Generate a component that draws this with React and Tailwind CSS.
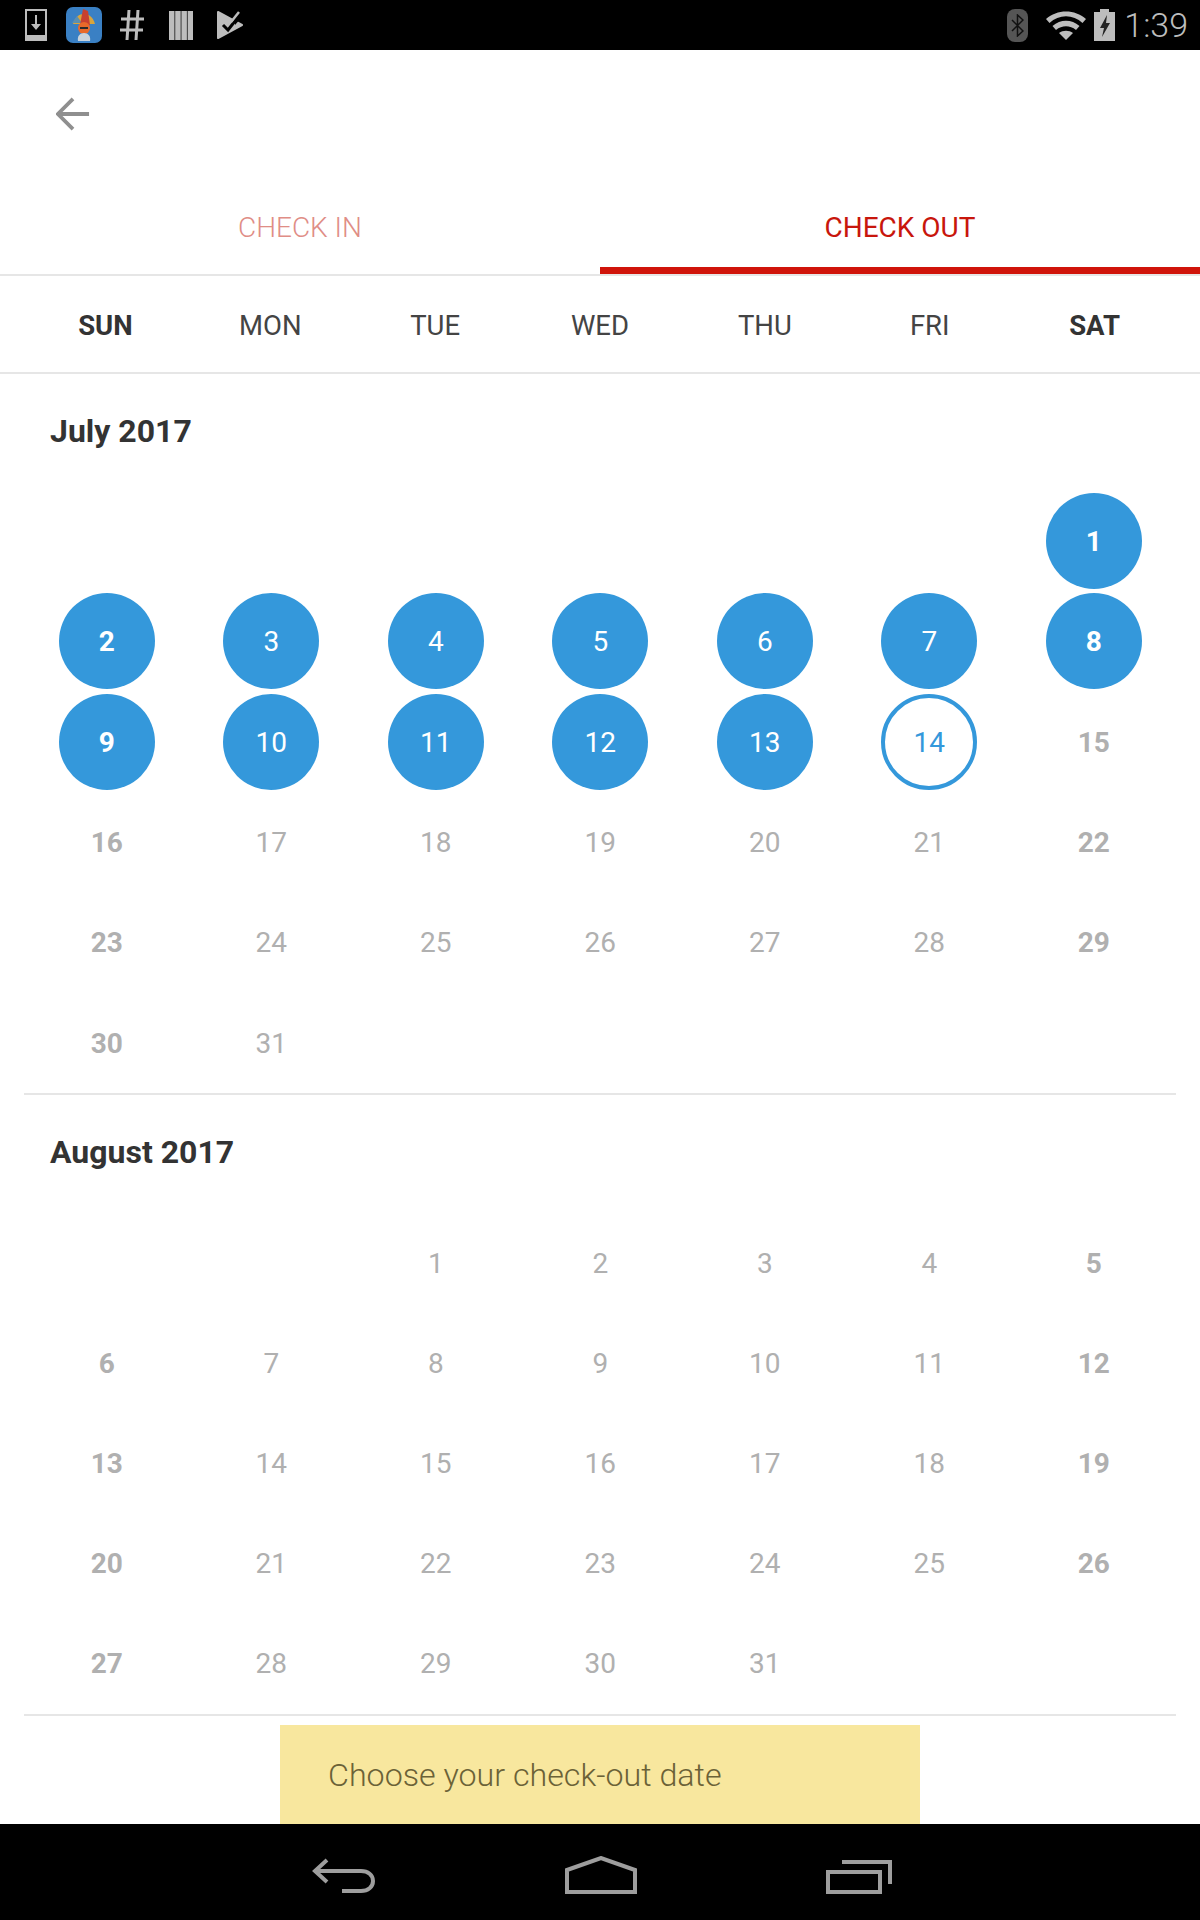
const weekdays = ['SUN', 'MON', 'TUE', 'WED', 'THU', 'FRI', 'SAT'];

const july = [null, null, null, null, null, null, 1, ...Array.from({ length: 30 }, (_, i) => i + 2)];
const august = [null, null, 1, ...Array.from({ length: 30 }, (_, i) => i + 2)];

const StatusIcons = () => (
  <div className="flex items-center pl-[25px]">
    <svg width="22" height="32" viewBox="0 0 22 32" className="text-[#bdbdbd]">
      <path d="M1 1h20v30H1z" fill="none" stroke="currentColor" strokeWidth="2" />
      <path d="M0 26h22v6H0z" fill="currentColor" />
      <path d="M10 6h2v9h4l-5 6-5-6h4z" fill="currentColor" />
    </svg>
    <div className="ml-[19px] w-[36px] h-[36px] rounded-[7px] bg-[#3a80c4] overflow-hidden">
      <svg width="36" height="36" viewBox="0 0 36 36">
        <path d="M7 17C9 10 13 7 18 7s9 3 11 10z" fill="#d9a53c" />
        <path d="M6 16l5-7 5 7z" fill="#5c8fb0" />
        <path d="M14 18l3-16 5 2 2 14z" fill="#c8402f" />
        <circle cx="18" cy="21" r="6" fill="#e8692a" />
        <path d="M14 20h8v2h-8z" fill="#2b2b2b" />
        <path d="M12 34c-1-5 2-8 6-8s7 3 6 8z" fill="#c9d3dc" />
      </svg>
    </div>
    <svg width="24" height="30" viewBox="0 0 24 30" className="ml-[18px] text-[#bdbdbd]">
      <path d="M9 0L7 30M18 0l-2 30M1 9h23M0 20h23" stroke="currentColor" strokeWidth="3" fill="none" />
    </svg>
    <svg width="24" height="30" viewBox="0 0 24 30" className="ml-[25px] text-[#bdbdbd]">
      <path d="M0 1h5.500v29H0zM6.200 1h5.500v29H6.200zM12.400 1h5.500v29h-5.500zM18.600 1H24v29h-5.400z" fill="currentColor" />
    </svg>
    <svg width="26" height="30" viewBox="0 0 26 30" className="ml-[24px] text-[#bdbdbd]">
      <path d="M1 2l24 13L1 28z" fill="currentColor" stroke="currentColor" strokeWidth="2" strokeLinejoin="round" />
      <path d="M6 15l5 5 11-14" stroke="#000" strokeWidth="3" fill="none" />
      <path d="M17 0l8 7-7 8z" fill="#000" />
      <path d="M14 12l8-10" stroke="currentColor" strokeWidth="2.500" fill="none" />
    </svg>
  </div>
);

const SystemIcons = () => (
  <div className="flex items-center pr-[12px]">
    <div className="w-[21px] h-[33px] rounded-[8px] bg-[#555555] flex items-center justify-center">
      <svg width="13" height="23" viewBox="0 0 13 23">
        <path d="M1 6l11 11-5.500 5V1L12 6 1 17" stroke="#111" strokeWidth="1.500" fill="none" />
      </svg>
    </div>
    <svg width="40" height="29" viewBox="0 0 40 29" className="ml-[18px] text-[#bdbdbd]">
      <path d="M0 8C11-2 29-2 40 8l-3.500 4C27 3 13 3 3.500 12z" fill="currentColor" />
      <path d="M6.500 15c8-7 19-7 27 0l-3.500 4c-6-5-14-5-20 0z" fill="currentColor" />
      <path d="M13 22c4-3 10-3 14 0l-7 7z" fill="currentColor" />
    </svg>
    <svg width="21" height="32" viewBox="0 0 21 32" className="ml-[8px] text-[#bdbdbd]">
      <path d="M6 0h9v3h6v29H0V3h6z" fill="currentColor" />
      <path d="M13 6l-7 13h4l-2 9 8-14h-4z" fill="#222" />
    </svg>
    <span className="ml-[9px] text-[34px] leading-none font-light text-[#bdbdbd]">1:39</span>
  </div>
);

const DayCell = ({ day, index, selected, current }) => {
  const weekend = index % 7 === 0 || index % 7 === 6;

  if (!day) return <div />;

  let circle = 'text-[#b0b0b0]';
  if (selected) circle = 'bg-[#3498db] text-white';
  if (current) circle = 'border-[4px] border-[#3498db] text-[#3498db]';

  return (
    <div className="flex items-center justify-center">
      <div className={`w-[96px] h-[96px] pt-[2px] rounded-full flex items-center justify-center text-[28px] ${circle} ${weekend ? 'font-bold' : 'font-normal'}`}>
        {day}
      </div>
    </div>
  );
};

const Month = ({ title, days, selectedUntil, current, gridClass }) => (
  <section className="mx-[24px] border-b-2 border-[#e6e6e6]">
    <h2 className="pl-[26px] pt-[41px] text-[32px] leading-none font-bold text-[#333333]">{title}</h2>
    <div className={`grid grid-cols-7 pl-[0.6px] ${gridClass}`}>
      {days.map((day, i) => (
        <DayCell
          key={i}
          day={day}
          index={i}
          selected={day && day <= selectedUntil}
          current={day === current}
        />
      ))}
    </div>
  </section>
);

export default function App() {
  return (
    <div className="relative w-[1200px] h-[1920px] overflow-hidden bg-white flex flex-col font-['Roboto',sans-serif]">
      <div className="h-[50px] shrink-0 bg-black flex items-center justify-between">
        <StatusIcons />
        <SystemIcons />
      </div>

      <header className="h-[115px] shrink-0 pl-[56px] pt-[47px]">
        <svg width="34" height="34" viewBox="0 0 36 36" className="text-[#8f8f8f]">
          <path d="M35 18H3M18 2L2 18l16 16" stroke="currentColor" strokeWidth="4" fill="none" />
        </svg>
      </header>

      <nav className="h-[111px] shrink-0 flex border-b-2 border-[#e6e6e6]">
        <div className="flex-1 flex justify-center pt-[46px] text-[28px] leading-[33px] font-light text-[#e08d86]">CHECK IN</div>
        <div className="flex-1 flex justify-center pt-[46px] text-[28px] leading-[33px] text-[#c8160c] border-b-[7px] border-[#d0140a]">CHECK OUT</div>
      </nav>

      <div className="h-[98px] shrink-0 px-[23px] pt-[3px] grid grid-cols-7 items-center border-b-2 border-[#e6e6e6]">
        {weekdays.map((name, i) => (
          <div key={name} className={`text-center text-[27.500px] ${i === 0 || i === 6 ? 'font-bold text-[#333333]' : 'font-normal text-[#444444]'}`}>
            {name}
          </div>
        ))}
      </div>

      <Month title="July 2017" days={july} selectedUntil={13} current={14} gridClass="pt-[44px] auto-rows-[100.300px]" />
      <Month title="August 2017" days={august} gridClass="pt-[45px] pb-[1px] auto-rows-[100px]" />

      <div className="absolute left-[280px] top-[1725px] w-[640px] h-[99px] bg-[#f8e79e] flex items-center pl-[48px] pt-[2px] text-[32.200px] font-light text-[#6b6237]">
        Choose your check-out date
      </div>

      <footer className="absolute left-0 right-0 bottom-0 h-[96px] bg-black flex">
        <div className="w-[312px]" />
        <svg width="66" height="36" viewBox="0 0 66 36" className="mt-[34px] text-[#9e9e9e]">
          <path d="M15 2L3 13l12 11M3 13h46c7 0 12 4 12 10s-5 10-12 10H30" stroke="currentColor" strokeWidth="4" fill="none" />
        </svg>
        <svg width="72" height="38" viewBox="0 0 72 38" className="ml-[187px] mt-[32px] text-[#9e9e9e]">
          <path d="M2 14L36 2l34 12v22H2z" stroke="currentColor" strokeWidth="4" fill="none" />
        </svg>
        <svg width="66" height="36" viewBox="0 0 66 36" className="ml-[189px] mt-[34px] text-[#9e9e9e]">
          <path d="M2 14h52v20H2z" stroke="currentColor" strokeWidth="4" fill="none" />
          <path d="M16 4h48v22" stroke="currentColor" strokeWidth="4" fill="none" />
        </svg>
      </footer>
    </div>
  );
}
